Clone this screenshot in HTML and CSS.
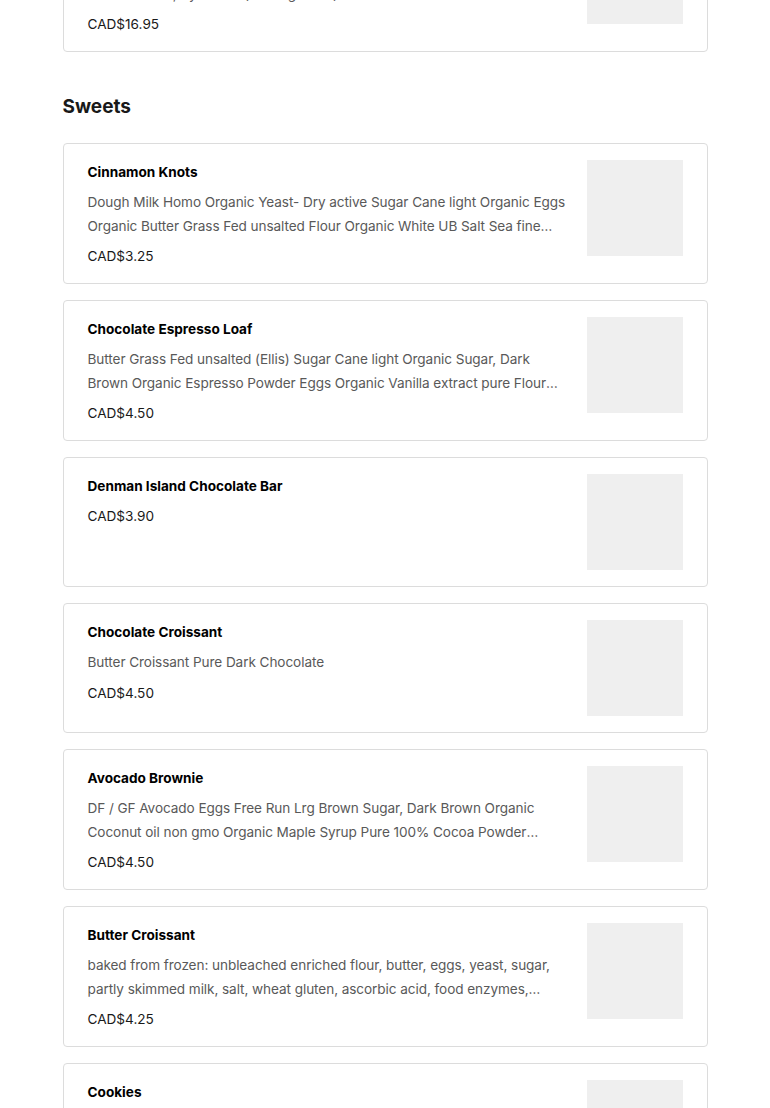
FILE: index.html
```html
<!DOCTYPE html>
<html lang="en">
<head>
<meta charset="utf-8">
<title>Menu</title>
<link rel="stylesheet" href="styles.css">
</head>
<body>
<main class="menu">
  <section class="category category-prev">
    <div class="items">
      <article class="item">
        <div class="item-text">
          <h3 class="item-name">Sourdough Loaf</h3>
          <p class="item-desc">Flour Organic White UB Water Salt Sea fine Starter (flour, water) Organic Whole Wheat, Rye Flour (stone ground) Seeds mix</p>
          <p class="item-price">CAD$16.95</p>
        </div>
        <div class="item-img"></div>
      </article>
    </div>
  </section>

  <section class="category">
    <h2 class="category-title">Sweets</h2>
    <div class="items">
      <article class="item">
        <div class="item-text">
          <h3 class="item-name">Cinnamon Knots</h3>
          <p class="item-desc">Dough Milk Homo Organic Yeast- Dry active Sugar Cane light Organic Eggs Organic Butter Grass Fed unsalted Flour Organic White UB Salt Sea fine Cinnamon Filling Butter Sugar Cinnamon</p>
          <p class="item-price">CAD$3.25</p>
        </div>
        <div class="item-img"></div>
      </article>
      <article class="item">
        <div class="item-text">
          <h3 class="item-name">Chocolate Espresso Loaf</h3>
          <p class="item-desc">Butter Grass Fed unsalted (Ellis) Sugar Cane light Organic Sugar, Dark Brown Organic Espresso Powder Eggs Organic Vanilla extract pure Flour Organic White UB Baking Powder</p>
          <p class="item-price">CAD$4.50</p>
        </div>
        <div class="item-img"></div>
      </article>
      <article class="item">
        <div class="item-text">
          <h3 class="item-name">Denman Island Chocolate Bar</h3>
          <p class="item-price">CAD$3.90</p>
        </div>
        <div class="item-img"></div>
      </article>
      <article class="item">
        <div class="item-text">
          <h3 class="item-name">Chocolate Croissant</h3>
          <p class="item-desc">Butter Croissant Pure Dark Chocolate</p>
          <p class="item-price">CAD$4.50</p>
        </div>
        <div class="item-img"></div>
      </article>
      <article class="item">
        <div class="item-text">
          <h3 class="item-name">Avocado Brownie</h3>
          <p class="item-desc">DF / GF Avocado Eggs Free Run Lrg Brown Sugar, Dark Brown Organic Coconut oil non gmo Organic Maple Syrup Pure 100% Cocoa Powder Organic Chocolate Chips Dark</p>
          <p class="item-price">CAD$4.50</p>
        </div>
        <div class="item-img"></div>
      </article>
      <article class="item">
        <div class="item-text">
          <h3 class="item-name">Butter Croissant</h3>
          <p class="item-desc">baked from frozen: unbleached enriched flour, butter, eggs, yeast, sugar, partly skimmed milk, salt, wheat gluten, ascorbic acid, food enzymes, malted barley flour</p>
          <p class="item-price">CAD$4.25</p>
        </div>
        <div class="item-img"></div>
      </article>
      <article class="item">
        <div class="item-text">
          <h3 class="item-name">Cookies</h3>
          <p class="item-desc">Chocolate Chip, Oatmeal Raisin, Ginger Molasses</p>
          <p class="item-price">CAD$3.00</p>
        </div>
        <div class="item-img"></div>
      </article>
    </div>
  </section>
</main>
</body>
</html>
```

FILE: styles.css
```css
* { box-sizing: border-box; }

html, body {
  margin: 0;
  padding: 0;
  background: #ffffff;
}

body {
  font-family: Inter, "Liberation Sans", Arial, sans-serif;
  color: #191919;
}

.menu {
  width: 645px;
  margin: -89px auto 0;
}

.category-title {
  margin: 41px 0 22px;
  font-size: 19px;
  line-height: 28px;
  font-weight: 700;
  color: #191919;
}

.items {
  display: flex;
  flex-direction: column;
  gap: 16px;
}

.item {
  display: flex;
  align-items: flex-start;
  gap: 16px;
  padding: 16px 24px;
  border: 1px solid #dcdcdc;
  border-radius: 4px;
  background: #fff;
}

.item-text {
  flex: 1;
  min-width: 0;
  padding-top: 1px;
}

.item-name {
  margin: 0 0 8px;
  font-size: 13.6px;
  line-height: 22px;
  font-weight: 700;
  color: #000;
}

.item-desc {
  margin: 0 0 7px;
  font-size: 13.6px;
  line-height: 23.5px;
  letter-spacing: -0.08px;
  color: #595959;
  display: -webkit-box;
  -webkit-line-clamp: 2;
  -webkit-box-orient: vertical;
  overflow: hidden;
}

.item-price {
  margin: 0;
  font-size: 13.6px;
  line-height: 22px;
  color: #191919;
}

.item-img {
  flex: 0 0 96px;
  width: 96px;
  height: 96px;
  background: #efefef;
}
```
